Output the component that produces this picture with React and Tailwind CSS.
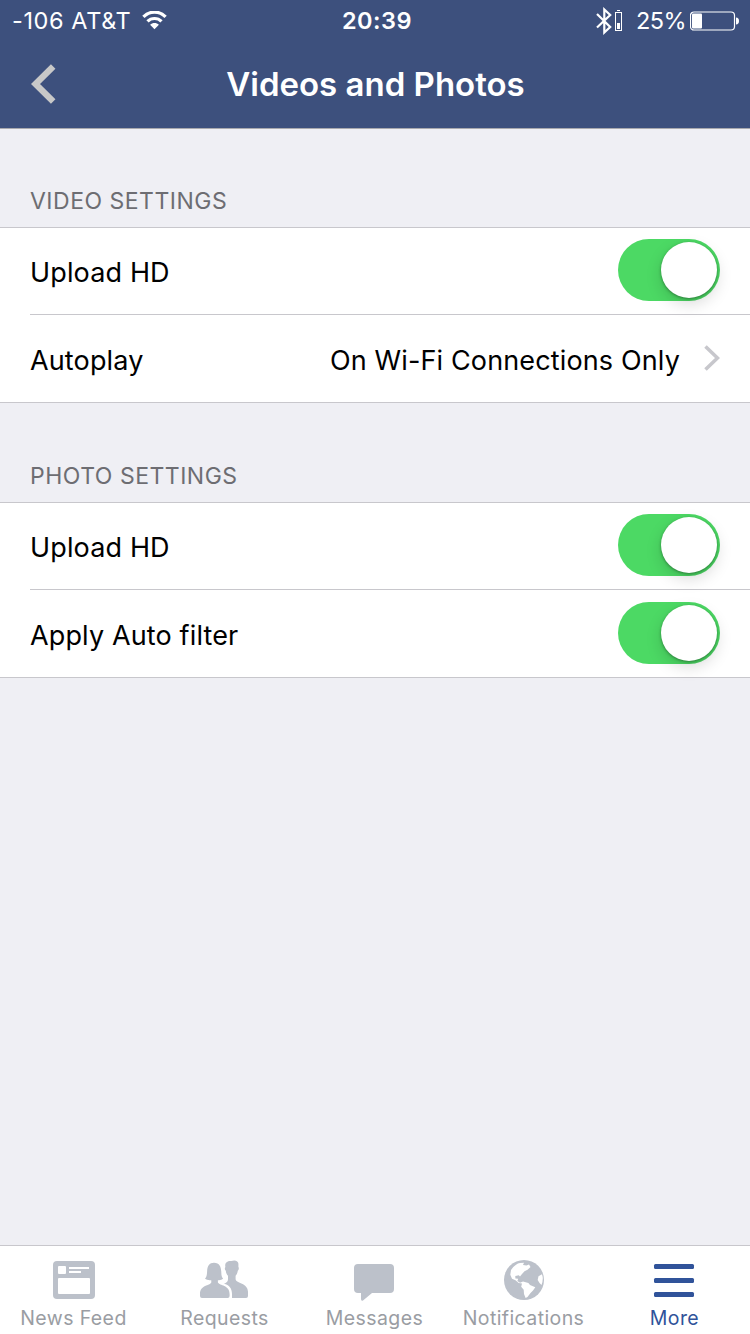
import { useState } from 'react';
import clsx from 'clsx';

function StatusBar() {
  return (
    <div className="grid h-10 grid-cols-3 items-center pt-px text-[23.5px] leading-10 whitespace-nowrap text-white">
      <div className="flex items-center pl-3">
        <span className="w-[130px] tracking-[0.6px]">-106 AT&amp;T</span>
        <svg className="-mt-px h-[19px] w-[25px]" viewBox="0 0 24 19" fill="none">
          <path d="M0.9 5.9C7 -0.5 17 -0.5 23.1 5.9" stroke="#fff" strokeWidth="3.2" />
          <path d="M5 10.4C8.8 6.5 15.2 6.5 19 10.4" stroke="#fff" strokeWidth="3.2" />
          <path d="M12 18.2L7.6 13.7C10 11.4 14 11.4 16.4 13.7Z" fill="#fff" />
        </svg>
      </div>
      <div className="pl-1 text-center font-semibold tracking-[0.5px]">20:39</div>
      <div className="flex items-center justify-end pr-[11px]">
        <svg className="h-[28px] w-[16px]" viewBox="0 0 16 28" fill="none" stroke="#fff" strokeWidth="2.2">
          <path d="M1 7L14.2 20L8.3 25.5V2.5L14.2 8L1 20.5" />
        </svg>
        <svg className="-mt-px ml-[3px] h-[22px] w-[7px]" viewBox="0 0 7 22">
          <path d="M2 0.5H5" stroke="#fff" />
          <rect x="0.5" y="2.5" width="6" height="18" fill="none" stroke="#fff" />
          <rect x="2" y="13" width="3" height="6" fill="#fff" />
        </svg>
        <span className="ml-[14px] w-[54px] tracking-[-0.6px]">25%</span>
        <svg className="-mt-px h-[20px] w-[49px]" viewBox="0 0 49 20">
          <rect x="0.5" y="1" width="44" height="18" rx="3.5" fill="none" stroke="#fff" strokeWidth="1.2" />
          <rect x="2" y="2.5" width="10" height="15" rx="1" fill="#fff" />
          <path d="M46 6.5C48 6.5 49 8 49 10S48 13.5 46 13.5Z" fill="#fff" />
        </svg>
      </div>
    </div>
  );
}

function NavBar() {
  return (
    <div className="flex h-[88px] items-center">
      <button className="w-20 pl-[31px]">
        <svg className="h-10 w-[25px]" viewBox="0 0 25 40" fill="none">
          <path d="M22.2 2.5L4.5 20L22.2 37.5" stroke="#c8c8c8" strokeWidth="6.4" />
        </svg>
      </button>
      <h1 className="flex-1 pt-0.5 pr-[79px] text-center text-[33px] font-semibold whitespace-nowrap text-white">
        Videos and Photos
      </h1>
    </div>
  );
}

function Toggle({ checked, onChange }) {
  return (
    <button
      role="switch"
      aria-checked={checked}
      onClick={() => onChange(!checked)}
      className={clsx(
        'mb-0.5 flex h-[62px] w-[102px] items-center rounded-full px-[3px]',
        checked ? 'justify-end bg-[#4cd964]' : 'justify-start bg-gray-200'
      )}
    >
      <span className="size-14 rounded-full bg-white shadow-[0_1px_3px_rgba(0,0,0,0.35),0_6px_16px_rgba(0,0,0,0.15)]" />
    </button>
  );
}

function Section({ title, children }) {
  return (
    <section>
      <h2 className="flex h-[99px] items-end pb-[9px] pl-[30px] text-[23px] leading-[34px] tracking-[0.5px] whitespace-nowrap text-[#6d6d72]">
        {title}
      </h2>
      <div className="border-y border-[#c8c7cc] bg-white">{children}</div>
    </section>
  );
}

function Row({ label, last, children }) {
  return (
    <div
      className={clsx(
        'ml-[30px] flex h-[87px] items-center justify-between pr-[30px] text-[27px] tracking-[0.14px] whitespace-nowrap text-black',
        !last && 'border-b border-[#c8c7cc]'
      )}
    >
      <span className={last ? 'pt-1.5' : 'pt-[5px]'}>{label}</span>
      {children}
    </div>
  );
}

const tabs = [
  {
    label: 'News Feed',
    icon: (
      <>
        <rect x="3" y="3" width="42" height="38" rx="4" />
        <g fill="#fff">
          <rect x="8" y="8" width="8" height="8" rx="1" />
          <rect x="19" y="9" width="20" height="2" />
          <rect x="19" y="13" width="12" height="2" />
          <rect x="8" y="20" width="32" height="16" rx="1" />
        </g>
      </>
    ),
  },
  {
    label: 'Requests',
    icon: (
      <>
        <path d="M31.2 3C35 1.6 38.5 2.8 38.4 6V9C39.2 9.6 38.8 12 37.8 12.7C37.4 15.4 36.4 16.8 35.6 17.7V21.2C36.2 25.5 48 24.8 48 33.7V38Q48 40 46 40H32V36C32 30.5 29.2 26.9 24 25.8C26.5 24.5 27.8 23.8 28 21.2V17.7C27 16.7 26 15.1 25.8 12.7C24.6 12 24.6 9.6 25.4 9C24.4 4.8 27.4 2.6 31.2 3Z" />
        <path d="M14 4.8C19.7 4.8 21.2 9.3 21.3 14.5C21.3 17.7 22.1 19.7 23.1 20.6C21.9 22.1 19.8 22.4 17.9 22.2V24.5C19.6 27.7 29.6 27 29.6 36V38Q29.6 40 27.6 40H2Q0 40 0 38V36C0 27 10 27.7 11.3 24.5V22.2C9 22.5 6.5 22.2 5 20.6C6.4 19.6 7 17 7.1 13.7C7.3 7.7 9.4 4.8 14 4.8Z" />
      </>
    ),
  },
  {
    label: 'Messages',
    icon: <path d="M8 6H40Q44 6 44 10V31Q44 35 40 35H22L13 42.5Q11 43.5 11 41V35H8Q4 35 4 31V10Q4 6 8 6Z" />,
  },
  {
    label: 'Notifications',
    icon: (
      <>
        <circle cx="24" cy="22" r="20" />
        <g fill="#fff">
          <path d="M11 12C14 7.5 17.5 5.3 20 5L24 4.8L23 7L26.5 7.5L29 6.5L30.5 9L27.5 11.8L24.5 13.3L22 16L20 18.5L18.8 17.2L15.3 18L15.4 20.5L18.2 20.7L17.4 23L20 24.7L23 23.5L28.4 25L30 27L35.3 29.3L33 32.5L30.5 35L27.5 39L25.6 40L24 36L23.7 31.7L21.2 28.7L22 25.4L18.7 25L15.5 22.2L12 20.8L10.3 16.7Z" />
          <path d="M42 16.2L38.5 18.3L37.7 22L39.5 25L41.5 27Q43.8 21 42 16.2Z" />
        </g>
      </>
    ),
  },
  {
    label: 'More',
    icon: (
      <>
        <rect x="4" y="6" width="40" height="5" rx="1.5" />
        <rect x="4" y="20" width="40" height="5" rx="1.5" />
        <rect x="4" y="34" width="40" height="5" rx="1.5" />
      </>
    ),
  },
];

function TabBar() {
  const [active, setActive] = useState('More');

  return (
    <nav className="grid h-[89px] grid-cols-[148px_152px_148px_152px_148px] border-t border-[#c8c7cc] bg-white">
      {tabs.map((tab) => (
        <button
          key={tab.label}
          onClick={() => setActive(tab.label)}
          className={clsx(
            'flex flex-col items-center pt-3 text-[19.5px] tracking-[0.4px] whitespace-nowrap',
            tab.label === active ? 'text-[#30539a]' : 'text-[#9a9da3]'
          )}
        >
          <svg
            className={clsx('h-[46px] w-12', tab.label === active ? 'fill-[#30539a]' : 'fill-[#bcc1ca]')}
            viewBox="0 0 48 46"
          >
            {tab.icon}
          </svg>
          <span className={clsx('leading-[28px]', tab.label === 'Notifications' || tab.label === 'News Feed' ? 'pr-px' : 'pl-px')}>
            {tab.label}
          </span>
        </button>
      ))}
    </nav>
  );
}

export default function App() {
  const [videoHd, setVideoHd] = useState(true);
  const [photoHd, setPhotoHd] = useState(true);
  const [autoFilter, setAutoFilter] = useState(true);

  return (
    <div className="flex h-[1334px] w-[750px] flex-col overflow-hidden bg-[#efeff4] font-['Inter','Liberation_Sans',sans-serif]">
      <header className="h-[129px] border-b border-[#a9a9ae] bg-[#3d507d]">
        <StatusBar />
        <NavBar />
      </header>
      <main className="-mt-px flex-1">
        <Section title="VIDEO SETTINGS">
          <Row label="Upload HD">
            <Toggle checked={videoHd} onChange={setVideoHd} />
          </Row>
          <Row label="Autoplay" last>
            <span className="flex items-center">
              <span className="pt-1.5">On Wi-Fi Connections Only</span>
              <svg className="mb-0.5 ml-6 h-[26px] w-4" viewBox="0 0 16 26" fill="none">
                <path d="M1.5 1.5L13.5 13L1.5 24.5" stroke="#c7c7cc" strokeWidth="3.6" />
              </svg>
            </span>
          </Row>
        </Section>
        <Section title="PHOTO SETTINGS">
          <Row label="Upload HD">
            <Toggle checked={photoHd} onChange={setPhotoHd} />
          </Row>
          <Row label="Apply Auto filter" last>
            <Toggle checked={autoFilter} onChange={setAutoFilter} />
          </Row>
        </Section>
      </main>
      <TabBar />
    </div>
  );
}
